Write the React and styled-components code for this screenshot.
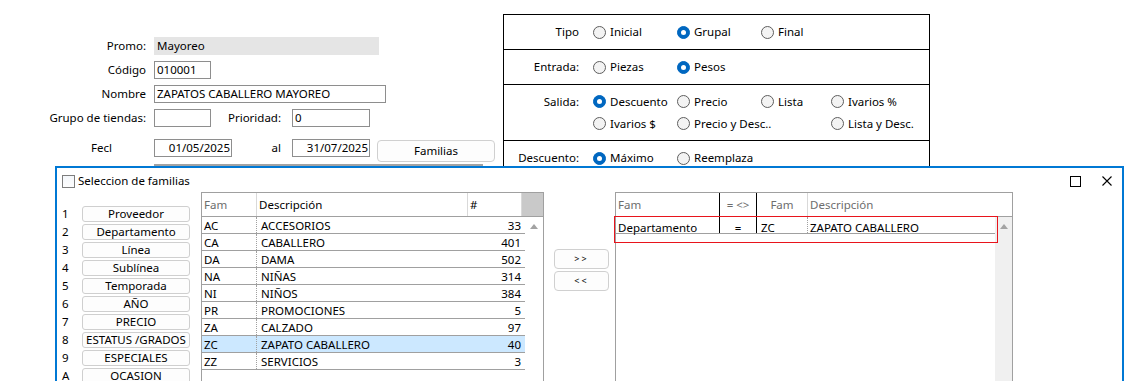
import React from "react";
import styled, { createGlobalStyle } from "styled-components";

const GlobalStyle = createGlobalStyle`
  html, body { margin: 0; padding: 0; background: #fff; }
  body {
    font-family: "Noto Sans", "Open Sans", sans-serif;
    font-size: 11.5px;
    color: #000;
  }
  * { box-sizing: border-box; }
`;

const Page = styled.div`
  position: relative;
  width: 1142px;
  height: 381px;
  overflow: hidden;
  background: #fff;
`;

const MainForm = styled.div`
  display: flex;
  align-items: flex-start;
`;

const LeftForm = styled.div`
  width: 503px;
  padding-top: 37px;
  display: flex;
  flex-direction: column;
`;

const FieldRow = styled.div`
  display: flex;
  align-items: flex-start;
  margin-top: ${(p) => p.$mt || 0}px;
`;

const FieldLabel = styled.div`
  width: ${(p) => p.$w || 146}px;
  padding-right: ${(p) => p.$pr || 0}px;
  margin-right: ${(p) => (p.$mr === undefined ? 8 : p.$mr)}px;
  text-align: right;
  line-height: 18px;
  white-space: nowrap;
`;

const TextBox = styled.div`
  width: ${(p) => p.$w}px;
  height: 18px;
  border: 1px solid ${(p) => (p.$filled ? "#e5e5e5" : "#8e8e8e")};
  background: ${(p) => (p.$filled ? "#e5e5e5" : "#fff")};
  padding: 0 ${(p) => (p.$align === "right" ? 1 : 2)}px 0 2px;
  line-height: 16px;
  text-align: ${(p) => p.$align || "left"};
  white-space: nowrap;
  overflow: hidden;
`;

const FormButton = styled.div`
  width: 118px;
  height: 22px;
  margin: 1px 0 0 7px;
  border: 1px solid #d0d0d0;
  border-radius: 4px;
  background: #fdfdfd;
  text-align: center;
  line-height: 20px;
`;

const HiddenStrip = styled.div`
  margin: 2px 0 0 154px;
  width: 329px;
  height: 8px;
  border-top: 2px solid #a3a3a3;
  background: #f0f0f0;
`;

const OptionsBox = styled.div`
  margin-top: 14px;
  width: 427px;
  border: 1px solid #000;
`;

const OptRow = styled.div`
  display: grid;
  grid-template-columns: 89px 84px 84px 70px 1fr;
  align-content: center;
  row-gap: 6px;
  height: ${(p) => p.$h}px;
  border-top: ${(p) => (p.$first ? "none" : "1px solid #000")};
`;

const OptLabel = styled.div`
  padding-right: 14px;
  text-align: right;
  line-height: 16px;
  white-space: nowrap;
`;

const RadioItem = styled.div`
  display: flex;
  align-items: center;
  gap: 4px;
  line-height: 16px;
  white-space: nowrap;
`;

const RadioCircle = styled.span`
  position: relative;
  flex: none;
  width: 13px;
  height: 13px;
  border-radius: 50%;
  border: 1px solid ${(p) => (p.$on ? "#0067c0" : "#5e5e5e")};
  background: ${(p) => (p.$on ? "#0067c0" : "#f3f3f3")};
  &::after {
    content: "";
    display: ${(p) => (p.$on ? "block" : "none")};
    position: absolute;
    left: 3px;
    top: 3px;
    width: 5px;
    height: 5px;
    border-radius: 50%;
    background: #fff;
  }
`;

const Dialog = styled.div`
  position: absolute;
  left: 55px;
  top: 166px;
  width: 1069px;
  height: 240px;
  border: 2px solid #0078d4;
  background: #fff;
`;

const TitleBar = styled.div`
  display: flex;
  align-items: center;
  height: 24px;
  padding: 2px 10px 0 5px;
`;

const TitleIcon = styled.span`
  width: 13px;
  height: 13px;
  margin-right: 3px;
  border: 1px solid #7d7d7d;
  background: linear-gradient(#f4f7fb, #fdfdfd);
`;

const TitleText = styled.div`
  flex: 1;
  line-height: 16px;
`;

const WindowControls = styled.div`
  display: flex;
  align-items: center;
  gap: 21px;
`;

const DialogBody = styled.div`
  display: flex;
  align-items: flex-start;
  padding-left: 5px;
`;

const ShortcutPanel = styled.div`
  width: 139px;
  margin-top: 14px;
  display: grid;
  grid-template-columns: 20px 108px;
  grid-auto-rows: 16px;
  row-gap: 2px;
`;

const ShortcutKey = styled.div`
  line-height: 15px;
`;

const ShortcutButton = styled.div`
  border: 1px solid #cfcfcf;
  border-radius: 3px;
  background: #fdfdfd;
  text-align: center;
  line-height: 14px;
  white-space: nowrap;
  overflow: hidden;
`;

const Grid = styled.div`
  position: relative;
  width: ${(p) => p.$w}px;
  margin-left: ${(p) => p.$ml || 0}px;
  height: 200px;
  border: 1px solid #a0a0a0;
  border-bottom: none;
`;

const GridHeader = styled.div`
  display: flex;
  height: 24px;
  border-bottom: 1px solid #a0a0a0;
`;

const HeadCell = styled.div`
  width: ${(p) => p.$w}px;
  flex: ${(p) => (p.$w ? "none" : 1)};
  padding: 0 2px;
  line-height: 23px;
  color: ${(p) => (p.$muted ? "#6d6d6d" : "#000")};
  text-align: ${(p) => p.$align || "left"};
  border-right: 1px solid ${(p) => p.$line || "#d9d9d9"};
  background: ${(p) => p.$bg || "transparent"};
  white-space: nowrap;
`;

const GridBody = styled.div`
  display: flex;
  height: 175px;
`;

const RowsArea = styled.div`
  width: ${(p) => p.$w}px;
`;

const GridRow = styled.div`
  display: flex;
  height: 17px;
  border-bottom: 1px solid #a0a0a0;
  background: ${(p) => (p.$selected ? "#cce8ff" : "transparent")};
`;

const Cell = styled.div`
  width: ${(p) => p.$w}px;
  flex: ${(p) => (p.$w ? "none" : 1)};
  padding: 0 ${(p) => p.$pr || 2}px 0 ${(p) => p.$pl || 2}px;
  line-height: ${(p) => p.$lh || 17}px;
  text-align: ${(p) => p.$align || "left"};
  border-left: ${(p) => (p.$dotted ? "1px dotted #a0a0a0" : "none")};
  border-right: ${(p) => (p.$solid ? "1px solid #000" : "none")};
  white-space: nowrap;
`;

const ScrollTrack = styled.div`
  width: ${(p) => p.$w}px;
  background: ${(p) => p.$bg};
  display: flex;
  justify-content: center;
  padding-top: 7px;
`;

const UpArrow = styled.span`
  width: 0;
  height: 0;
  border-left: 4px solid transparent;
  border-right: 4px solid transparent;
  border-bottom: 5px solid #a3a3a3;
`;

const FocusFrame = styled.div`
  position: absolute;
  left: -2px;
  top: 23px;
  width: 384px;
  height: 27px;
  border: 1px solid #e8141c;
  pointer-events: none;
`;

const MoveButtons = styled.div`
  display: flex;
  flex-direction: column;
  gap: 2px;
  margin: 57px 0 0 10px;
`;

const MoveButton = styled.div`
  width: 55px;
  height: 20px;
  border: 1px solid #d0d0d0;
  border-radius: 4px;
  background: #fdfdfd;
  text-align: center;
  font-size: 9px;
  letter-spacing: 2px;
  line-height: 17px;
`;

const Radio = ({ on, children }) => (
  <RadioItem>
    <RadioCircle $on={on} />
    {children}
  </RadioItem>
);

const shortcuts = [
  ["1", "Proveedor"],
  ["2", "Departamento"],
  ["3", "Línea"],
  ["4", "Sublínea"],
  ["5", "Temporada"],
  ["6", "AÑO"],
  ["7", "PRECIO"],
  ["8", "ESTATUS /GRADOS"],
  ["9", "ESPECIALES"],
  ["A", "OCASION"],
];

const families = [
  ["AC", "ACCESORIOS", 33],
  ["CA", "CABALLERO", 401],
  ["DA", "DAMA", 502],
  ["NA", "NIÑAS", 314],
  ["NI", "NIÑOS", 384],
  ["PR", "PROMOCIONES", 5],
  ["ZA", "CALZADO", 97],
  ["ZC", "ZAPATO CABALLERO", 40],
  ["ZZ", "SERVICIOS", 3],
];

const Empty = () => <div />;

export default function App() {
  return (
    <Page>
      <GlobalStyle />
      <MainForm>
        <LeftForm>
          <FieldRow>
            <FieldLabel>Promo:</FieldLabel>
            <TextBox $w={225} $filled>Mayoreo</TextBox>
          </FieldRow>
          <FieldRow $mt={6}>
            <FieldLabel>Código</FieldLabel>
            <TextBox $w={57}>010001</TextBox>
          </FieldRow>
          <FieldRow $mt={6}>
            <FieldLabel>Nombre</FieldLabel>
            <TextBox $w={232}>ZAPATOS CABALLERO MAYOREO</TextBox>
          </FieldRow>
          <FieldRow $mt={6}>
            <FieldLabel>Grupo de tiendas:</FieldLabel>
            <TextBox $w={57} />
            <FieldLabel $w={70} $mr={11}>Prioridad:</FieldLabel>
            <TextBox $w={78}>0</TextBox>
          </FieldRow>
          <FieldRow $mt={12}>
            <FieldLabel $pr={34}>Fecl</FieldLabel>
            <TextBox $w={78} $align="right">01/05/2025</TextBox>
            <FieldLabel $w={49} $mr={11}>al</FieldLabel>
            <TextBox $w={78} $align="right">31/07/2025</TextBox>
            <FormButton>Familias</FormButton>
          </FieldRow>
          <HiddenStrip />
        </LeftForm>

        <OptionsBox>
          <OptRow $h={34} $first>
            <OptLabel>Tipo</OptLabel>
            <Radio>Inicial</Radio>
            <Radio on>Grupal</Radio>
            <Radio>Final</Radio>
          </OptRow>
          <OptRow $h={35}>
            <OptLabel>Entrada:</OptLabel>
            <Radio>Piezas</Radio>
            <Radio on>Pesos</Radio>
          </OptRow>
          <OptRow $h={56}>
            <OptLabel>Salida:</OptLabel>
            <Radio on>Descuento</Radio>
            <Radio>Precio</Radio>
            <Radio>Lista</Radio>
            <Radio>Ivarios %</Radio>
            <Empty />
            <Radio>Ivarios $</Radio>
            <Radio>Precio y Desc..</Radio>
            <Empty />
            <Radio>Lista y Desc.</Radio>
          </OptRow>
          <OptRow $h={35}>
            <OptLabel>Descuento:</OptLabel>
            <Radio on>Máximo</Radio>
            <Radio>Reemplaza</Radio>
          </OptRow>
        </OptionsBox>
      </MainForm>

      <Dialog>
        <TitleBar>
          <TitleIcon />
          <TitleText>Seleccion de familias</TitleText>
          <WindowControls>
            <svg width="11" height="11" viewBox="0 0 11 11">
              <rect x="0.5" y="0.5" width="10" height="10" fill="none" stroke="#000" strokeWidth="1" />
            </svg>
            <svg width="10" height="10" viewBox="0 0 10 10">
              <path d="M0.5 0.5 L9.5 9.5 M9.5 0.5 L0.5 9.5" stroke="#000" strokeWidth="1.1" fill="none" />
            </svg>
          </WindowControls>
        </TitleBar>

        <DialogBody>
          <ShortcutPanel>
            {shortcuts.map(([k, label]) => (
              <React.Fragment key={k}>
                <ShortcutKey>{k}</ShortcutKey>
                <ShortcutButton>{label}</ShortcutButton>
              </React.Fragment>
            ))}
          </ShortcutPanel>

          <Grid $w={343}>
            <GridHeader>
              <HeadCell $w={55} $muted>Fam</HeadCell>
              <HeadCell $w={211}>Descripción</HeadCell>
              <HeadCell $w={54}>#</HeadCell>
              <HeadCell $w={21} $bg="#c9c9c9" $line="transparent" />
            </GridHeader>
            <GridBody>
              <RowsArea $w={323}>
                {families.map(([code, desc, n]) => (
                  <GridRow key={code} $selected={code === "ZC"}>
                    <Cell $w={54}>{code}</Cell>
                    <Cell $w={211} $dotted $pl={4}>{desc}</Cell>
                    <Cell $align="right" $pr={4}>{n}</Cell>
                  </GridRow>
                ))}
              </RowsArea>
              <ScrollTrack $w={18} $bg="#fff">
                <UpArrow />
              </ScrollTrack>
            </GridBody>
          </Grid>

          <MoveButtons>
            <MoveButton>&gt;&gt;</MoveButton>
            <MoveButton>&lt;&lt;</MoveButton>
          </MoveButtons>

          <Grid $w={398} $ml={6}>
            <GridHeader>
              <HeadCell $w={104} $muted $line="#000">Fam</HeadCell>
              <HeadCell $w={37} $muted $line="#000" $align="center">= &lt;&gt;</HeadCell>
              <HeadCell $w={51} $muted $align="center">Fam</HeadCell>
              <HeadCell $muted $line="transparent">Descripción</HeadCell>
            </GridHeader>
            <GridBody>
              <RowsArea $w={379}>
                <GridRow>
                  <Cell $w={104} $solid $lh={22}>Departamento</Cell>
                  <Cell $w={37} $solid $align="center" $lh={22}>=</Cell>
                  <Cell $w={50} $pl={4} $lh={22}>ZC</Cell>
                  <Cell $dotted $lh={22}>ZAPATO CABALLERO</Cell>
                </GridRow>
              </RowsArea>
              <ScrollTrack $w={17} $bg="#f0f0f0">
                <UpArrow />
              </ScrollTrack>
            </GridBody>
            <FocusFrame />
          </Grid>
        </DialogBody>
      </Dialog>
    </Page>
  );
}
